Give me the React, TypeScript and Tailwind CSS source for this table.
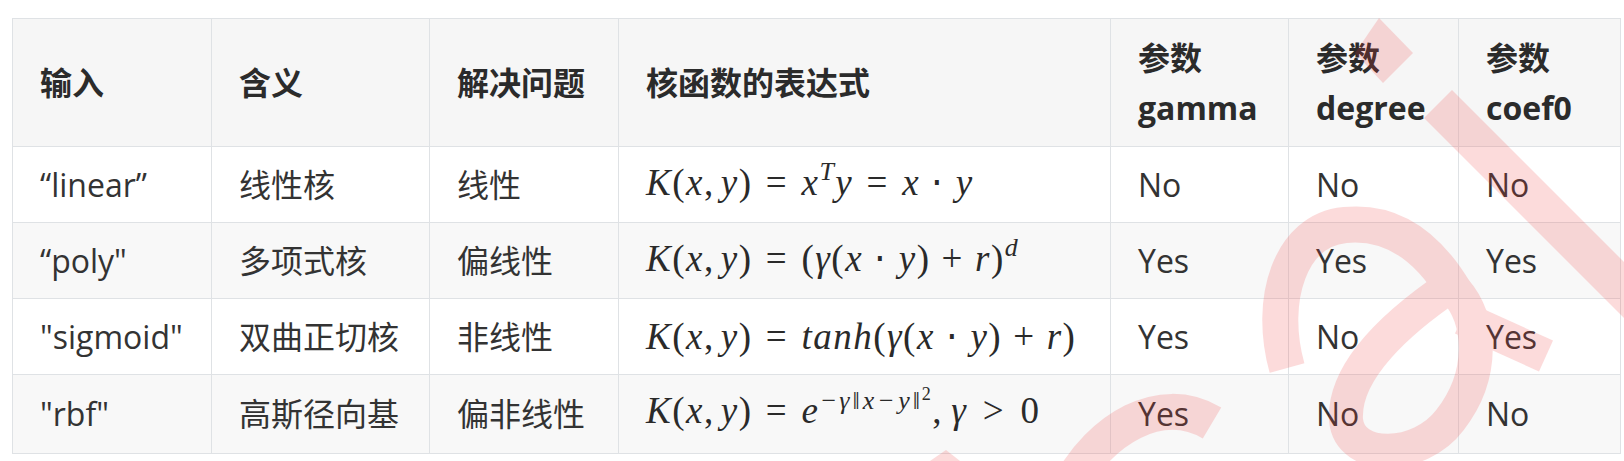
import React from "react";

const I = ({ children }: { children: React.ReactNode }) => <span className="italic">{children}</span>;
const Rel = ({ children }: { children: React.ReactNode }) => <span className="mx-[0.36em]">{children}</span>;
const Bin = ({ children }: { children: React.ReactNode }) => <span className="mx-[0.3em]">{children}</span>;
const Sup = ({ children }: { children: React.ReactNode }) => (
  <span className="relative -top-[0.55em] text-[0.7em]">{children}</span>
);

const Math = ({ children }: { children: React.ReactNode }) => (
  <span className="font-['Liberation_Serif',serif] text-[37px] tracking-[0.04em] text-[#2a2a2a] whitespace-nowrap">
    {children}
  </span>
);

const Kxy = () => (
  <>
    <I>K</I>(<I>x</I>,<span className="ml-[0.1667em]" />
    <I>y</I>)
  </>
);

const formulas = [
  <Math key="1">
    <Kxy />
    <Rel>=</Rel>
    <I>x</I>
    <Sup>
      <I>T</I>
    </Sup>
    <I>y</I>
    <Rel>=</Rel>
    <I>x</I>
    <Bin>⋅</Bin>
    <I>y</I>
  </Math>,
  <Math key="2">
    <Kxy />
    <Rel>=</Rel>(<I>γ</I>(<I>x</I>
    <Bin>⋅</Bin>
    <I>y</I>)<Bin>+</Bin>
    <I>r</I>)
    <Sup>
      <I>d</I>
    </Sup>
  </Math>,
  <Math key="3">
    <Kxy />
    <Rel>=</Rel>
    <I>tanh</I>(<I>γ</I>(<I>x</I>
    <Bin>⋅</Bin>
    <I>y</I>)<Bin>+</Bin>
    <I>r</I>)
  </Math>,
  <Math key="4">
    <Kxy />
    <Rel>=</Rel>
    <I>e</I>
    <span className="relative -top-[0.55em] text-[0.7em] ml-[0.08em] tracking-[0.06em]">
      −<span className="ml-[0.06em]" />
      <I>γ</I>
      <span className="mx-[0.06em]">‖</span>
      <I>x</I>
      <span className="mx-[0.12em]">−</span>
      <I>y</I>
      <span className="ml-[0.06em]">‖</span>
      <span className="relative -top-[0.5em] text-[0.7em]">2</span>
    </span>
    ,<span className="ml-[0.22em]" />
    <I>γ</I>
    <span className="mx-[0.42em]">&gt;</span>0
  </Math>,
];

const rows = [
  { input: "“linear”", mean: "线性核", solve: "线性", g: "No", d: "No", c: "No", bg: "bg-white", h: "h-[76px]" },
  { input: "“poly\"", mean: "多项式核", solve: "偏线性", g: "Yes", d: "Yes", c: "Yes", bg: "bg-[#f8f8f8]", h: "h-[76px]" },
  { input: "\"sigmoid\"", mean: "双曲正切核", solve: "非线性", g: "Yes", d: "No", c: "Yes", bg: "bg-white", h: "h-[76px]" },
  { input: "\"rbf\"", mean: "高斯径向基", solve: "偏非线性", g: "Yes", d: "No", c: "No", bg: "bg-[#f8f8f8]", h: "h-[79px]" },
];

const th = "border border-[#dfe2e5] px-[27px] text-left font-bold align-middle leading-[50px]";
const td = "border border-[#dfe2e5] px-[27px] align-middle leading-[46px] whitespace-nowrap";

export default function App() {
  return (
    <div className="relative w-[1624px] h-[461px] bg-white overflow-hidden font-['Open_Sans','Noto_Sans_CJK_SC',sans-serif]">
      <div className="pt-[18px] pl-[12px]">
        <table className="border-collapse table-fixed w-[1608px] text-[32px] text-[#333]">
          <colgroup>
            <col className="w-[199px]" />
            <col className="w-[218px]" />
            <col className="w-[189px]" />
            <col className="w-[492px]" />
            <col className="w-[178px]" />
            <col className="w-[170px]" />
            <col className="w-[162px]" />
          </colgroup>
          <thead>
            <tr className="h-[128px] bg-[#f6f6f6] text-[#2b2b2b]">
              <th className={th}>输入</th>
              <th className={th}>含义</th>
              <th className={th}>解决问题</th>
              <th className={th}>核函数的表达式</th>
              <th className={th}>
                参数
                <br />
                gamma
              </th>
              <th className={th}>
                参数
                <br />
                degree
              </th>
              <th className={th}>
                参数
                <br />
                coef0
              </th>
            </tr>
          </thead>
          <tbody>
            {rows.map((r, i) => (
              <tr key={i} className={`${r.bg} ${r.h}`}>
                <td className={td}>{r.input}</td>
                <td className={td}>{r.mean}</td>
                <td className={td}>{r.solve}</td>
                <td className={td}>{formulas[i]}</td>
                <td className={td}>{r.g}</td>
                <td className={td}>{r.d}</td>
                <td className={td}>{r.c}</td>
              </tr>
            ))}
          </tbody>
        </table>
      </div>

      <svg
        className="pointer-events-none absolute left-0 top-0"
        width="1624"
        height="461"
        viewBox="0 0 1624 461"
      >
        <g opacity="0.18">
          <polygon points="1355,53 1379,18 1413,53 1383,83" fill="#f03c3c" />
          <polygon points="1424,118 1452,90 1660,298 1632,326" fill="#f03c3c" />
          <path
            d="M1287,368 C1268,300 1290,230 1345,225 C1395,220 1430,250 1455,292"
            fill="none"
            stroke="#f03c3c"
            strokeWidth="36"
          />
          <path
            d="M1452,285 C1400,320 1343,370 1346,420 C1350,462 1420,460 1450,420 C1485,375 1482,320 1455,290"
            fill="none"
            stroke="#f03c3c"
            strokeWidth="34"
          />
          <path d="M1462,318 L1546,356" fill="none" stroke="#f03c3c" strokeWidth="34" />
          <path d="M1070,485 C1100,430 1160,392 1212,423" fill="none" stroke="#f03c3c" strokeWidth="36" />
          <polygon points="930,461 946,450 960,461" fill="#f03c3c" />
        </g>
      </svg>
    </div>
  );
}
